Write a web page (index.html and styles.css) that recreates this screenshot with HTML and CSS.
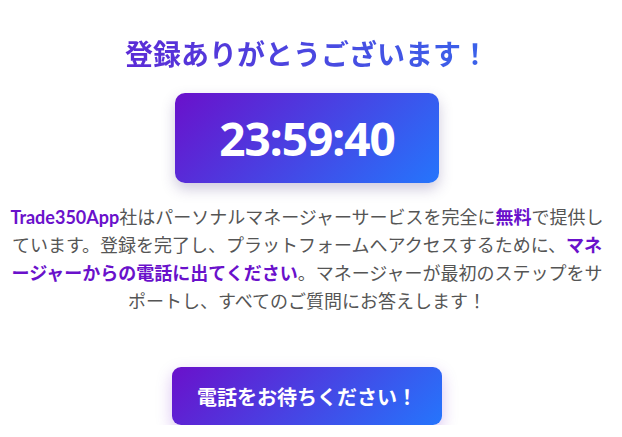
FILE: index.html
```html
<!DOCTYPE html>
<html lang="ja">
<head>
<meta charset="utf-8">
<link rel="stylesheet" href="styles.css">
</head>
<body>
<main class="page">
  <h1 class="title">登録ありがとうございます！</h1>
  <div class="timer">23:59:40</div>
  <p class="message"><span class="hl brand">Trade350App</span>社はパーソナルマネージャーサービスを完全に<span class="hl">無料</span>で提供しています。登録を完了し、プラットフォームへアクセスするために、<span class="hl">マネージャーからの電話に出てください</span>。マネージャーが最初のステップをサポートし、すべてのご質問にお答えします！</p>
  <button class="cta">電話をお待ちください！</button>
</main>
</body>
</html>
```
FILE: styles.css
```css
html, body {
  margin: 0;
  background: #ffffff;
}
body {
  padding: 0 8px 0 0;
  font-family: "Noto Sans", "Noto Sans CJK JP", sans-serif;
}
.page {
  width: 600px;
  margin: 0 auto;
  display: flex;
  flex-direction: column;
  align-items: center;
  padding-top: 34px;
}
.title {
  margin: 0;
  font-size: 28px;
  line-height: 40px;
  font-weight: 700;
  background: linear-gradient(90deg, #5b2bd6, #3a63ea);
  -webkit-background-clip: text;
  background-clip: text;
  color: transparent;
}
.timer {
  margin-top: 19px;
  width: 264px;
  height: 90px;
  border-radius: 10px;
  background: linear-gradient(135deg, #6a11cb 0%, #2575fc 100%);
  box-shadow: 0 6px 14px rgba(60, 40, 120, 0.25);
  color: #fff;
  font-family: "Noto Sans", sans-serif;
  font-weight: 700;
  font-size: 46px;
  letter-spacing: -1px;
  display: flex;
  align-items: center;
  justify-content: center;
}
.message {
  margin: 20px 0 0;
  width: 600px;
  text-align: center;
  font-size: 18px;
  line-height: 28px;
  color: #555;
}
.hl {
  color: #6a11cb;
  font-weight: 700;
}
.brand {
  font-family: "Lato", "Noto Sans", sans-serif;
  font-size: 18px;
}
.cta {
  margin-top: 52px;
  width: 270px;
  height: 58px;
  border: none;
  border-radius: 9px;
  background: linear-gradient(135deg, #6a11cb 0%, #2575fc 100%);
  box-shadow: 0 6px 16px rgba(106, 17, 203, 0.25);
  color: #fff;
  font-family: "Noto Sans", "Noto Sans CJK JP", sans-serif;
  font-size: 20px;
  font-weight: 700;
}
```
